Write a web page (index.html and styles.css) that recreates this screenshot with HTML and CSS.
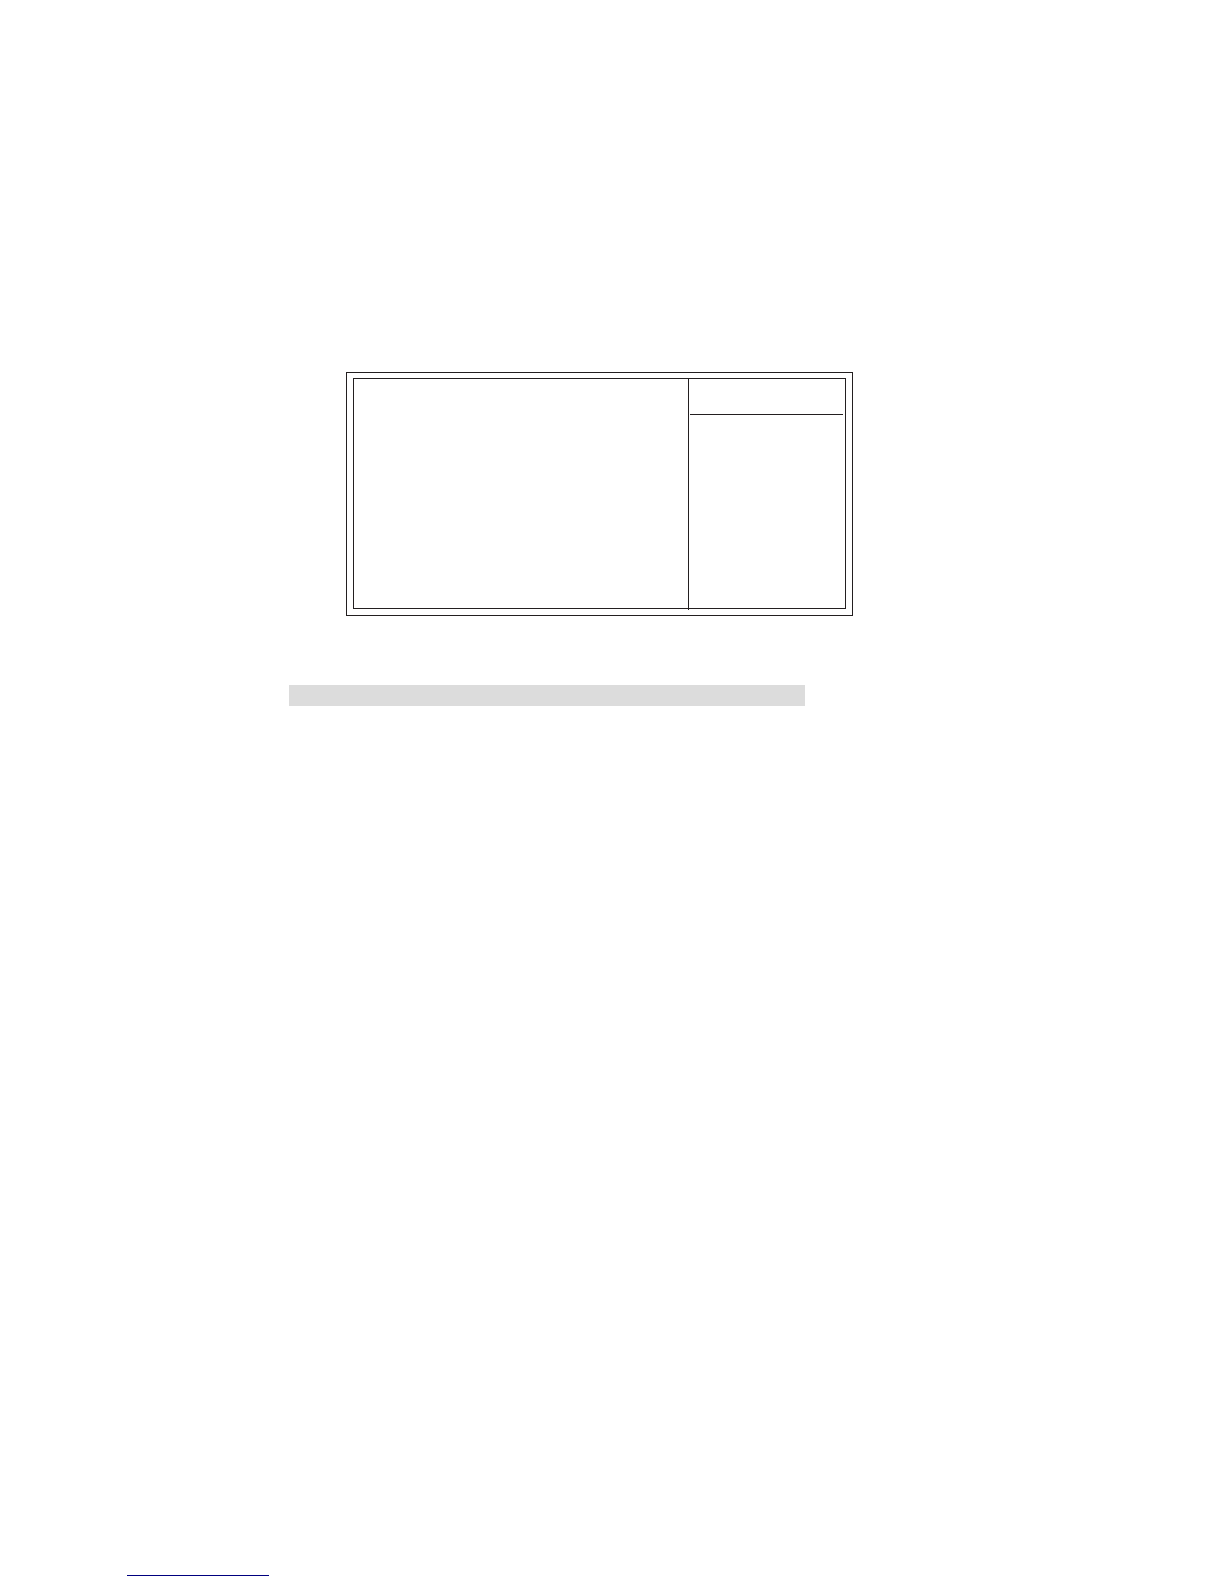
FILE: index.html
```html
<!DOCTYPE html>
<html lang="en">
<head>
<meta charset="utf-8">
<meta name="viewport" content="width=device-width, initial-scale=1">
<title>Setup menu</title>
<link rel="stylesheet" href="styles.css">
</head>
<body>
<main class="page">
  <section class="screen">
    <div class="screen-inner">
      <div class="options"></div>
      <aside class="help">
        <div class="help-head"></div>
      </aside>
    </div>
  </section>
  <div class="band"></div>
</main>
<footer class="footer">
  <hr class="footer-rule">
</footer>
</body>
</html>
```

FILE: styles.css
```css
* {
  box-sizing: border-box;
}

body {
  margin: 0;
  min-height: 100vh;
  display: flex;
  flex-direction: column;
  justify-content: space-between;
  background: #fff;
  font-family: "Liberation Sans", Arial, sans-serif;
}

.page {
  padding: 372px 24px 0 289px;
}

/* The outer frame of the screen */
.screen {
  max-width: 507px;
  margin-left: 57px;
  padding: 5px 6px 6px;
  border: 1px solid #231f20;
}

.screen-inner {
  display: grid;
  grid-template-columns: 334fr 157fr;
  min-height: 231px;
  border: 1px solid #231f20;
}

/* The divider runs just past the bottom frame */
.help {
  margin-bottom: -2px;
  border-left: 1px solid #231f20;
}

.help-head {
  min-height: 36px;
  margin: 0 2px 0 1px;
  border-bottom: 1px solid #231f20;
}

.band {
  max-width: 516px;
  min-height: 21px;
  margin-top: 69px;
  background: #dcdcdc;
}

.footer {
  padding: 0 24px 8px 127px;
}

.footer-rule {
  max-width: 142px;
  margin: 0;
  border: 0;
  border-top: 1px solid #00007f;
}
```
